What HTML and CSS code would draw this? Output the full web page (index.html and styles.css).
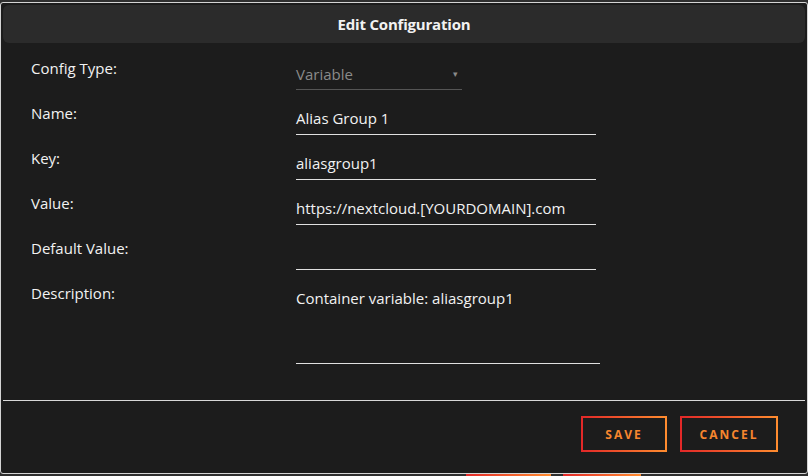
FILE: index.html
```html
<!DOCTYPE html>
<html lang="en">
<head>
  <meta charset="UTF-8">
  <title>Edit Configuration</title>
  <link rel="stylesheet" href="styles.css">
</head>
<body>
  <div class="dialog">
    <!-- title bar -->
    <div class="dialog-title">Edit Configuration</div>

    <div class="form">
      <div class="row">
        <label class="label">Config Type:</label>
        <div class="select">
          <span>Variable</span>
          <span class="arrow">&#9662;</span>
        </div>
      </div>
      <div class="row">
        <label class="label">Name:</label>
        <div class="field">Alias Group 1</div>
      </div>
      <div class="row">
        <label class="label">Key:</label>
        <div class="field">aliasgroup1</div>
      </div>
      <div class="row">
        <label class="label">Value:</label>
        <div class="field">https://nextcloud.[YOURDOMAIN].com</div>
      </div>
      <div class="row">
        <label class="label">Default Value:</label>
        <div class="field"></div>
      </div>
      <div class="row">
        <label class="label">Description:</label>
        <div class="field textarea">Container variable: aliasgroup1</div>
      </div>
    </div>

    <div class="buttons">
      <button class="btn btn-save">Save</button>
      <button class="btn btn-cancel">Cancel</button>
    </div>
  </div>

  <!-- buttons of the page behind the dialog -->
  <div class="behind">
    <span class="ghost ghost-a"></span>
    <span class="ghost ghost-b"></span>
  </div>
</body>
</html>
```

FILE: styles.css
```css
html, body {
  margin: 0;
  background: #2f2f2f;
  height: 100%;
  overflow: hidden;
}

body {
  font-family: 'Open Sans', sans-serif;
  font-size: 15px;
  color: #f2f2f2;
  padding-top: 2px;
}

.dialog {
  box-sizing: border-box;
  width: 808px;
  height: 472px;
  border: 1px solid #d4d4d4;
  border-radius: 3px;
  background: #1c1c1c;
  padding: 2px;
  display: flex;
  flex-direction: column;
}

.dialog-title {
  height: 38px;
  line-height: 38px;
  background: #2b2b2b;
  border-radius: 6px;
  text-align: center;
  font-weight: bold;
  font-size: 15px;
  letter-spacing: -0.2px;
}

.form {
  display: flex;
  flex-direction: column;
  gap: 15px;
  padding: 17px 0 36px 28px;
  border-bottom: 1px solid #d8d8d8;
}

.row {
  display: flex;
  align-items: flex-start;
}

.label {
  width: 265px;
  line-height: 17px;
}

.select {
  box-sizing: border-box;
  width: 166px;
  height: 30px;
  padding: 4px 0 5px;
  line-height: 20px;
  color: #8a8a8a;
  border-bottom: 1px solid #555;
  display: flex;
  justify-content: space-between;
}

.arrow {
  font-size: 9px;
  padding-right: 4px;
}

.field {
  box-sizing: border-box;
  width: 300px;
  height: 30px;
  padding: 3px 0 6px;
  line-height: 20px;
  border-bottom: 1px solid #e0e0e0;
}

.textarea {
  width: 304px;
  height: 79px;
  padding-top: 3px;
}

.buttons {
  display: flex;
  justify-content: flex-end;
  gap: 13px;
  padding: 15px 27px 0 0;
}

.btn {
  height: 36px;
  padding: 0;
  background: transparent;
  border: 2px solid;
  border-image: linear-gradient(90deg, #e22828, #ff8c2f) 1;
  color: #f7862e;
  font-family: 'Open Sans', sans-serif;
  font-weight: bold;
  font-size: 12px;
  letter-spacing: 2px;
  text-transform: uppercase;
  text-align: center;
}

.btn-save {
  width: 86px;
}

.btn-cancel {
  width: 98px;
}

.behind {
  display: flex;
  padding-left: 466px;
  gap: 12px;
}

.ghost {
  width: 85px;
  height: 2px;
  background: linear-gradient(90deg, #e22828, #ff8c2f);
}

.ghost-b {
  width: 78px;
}
```
